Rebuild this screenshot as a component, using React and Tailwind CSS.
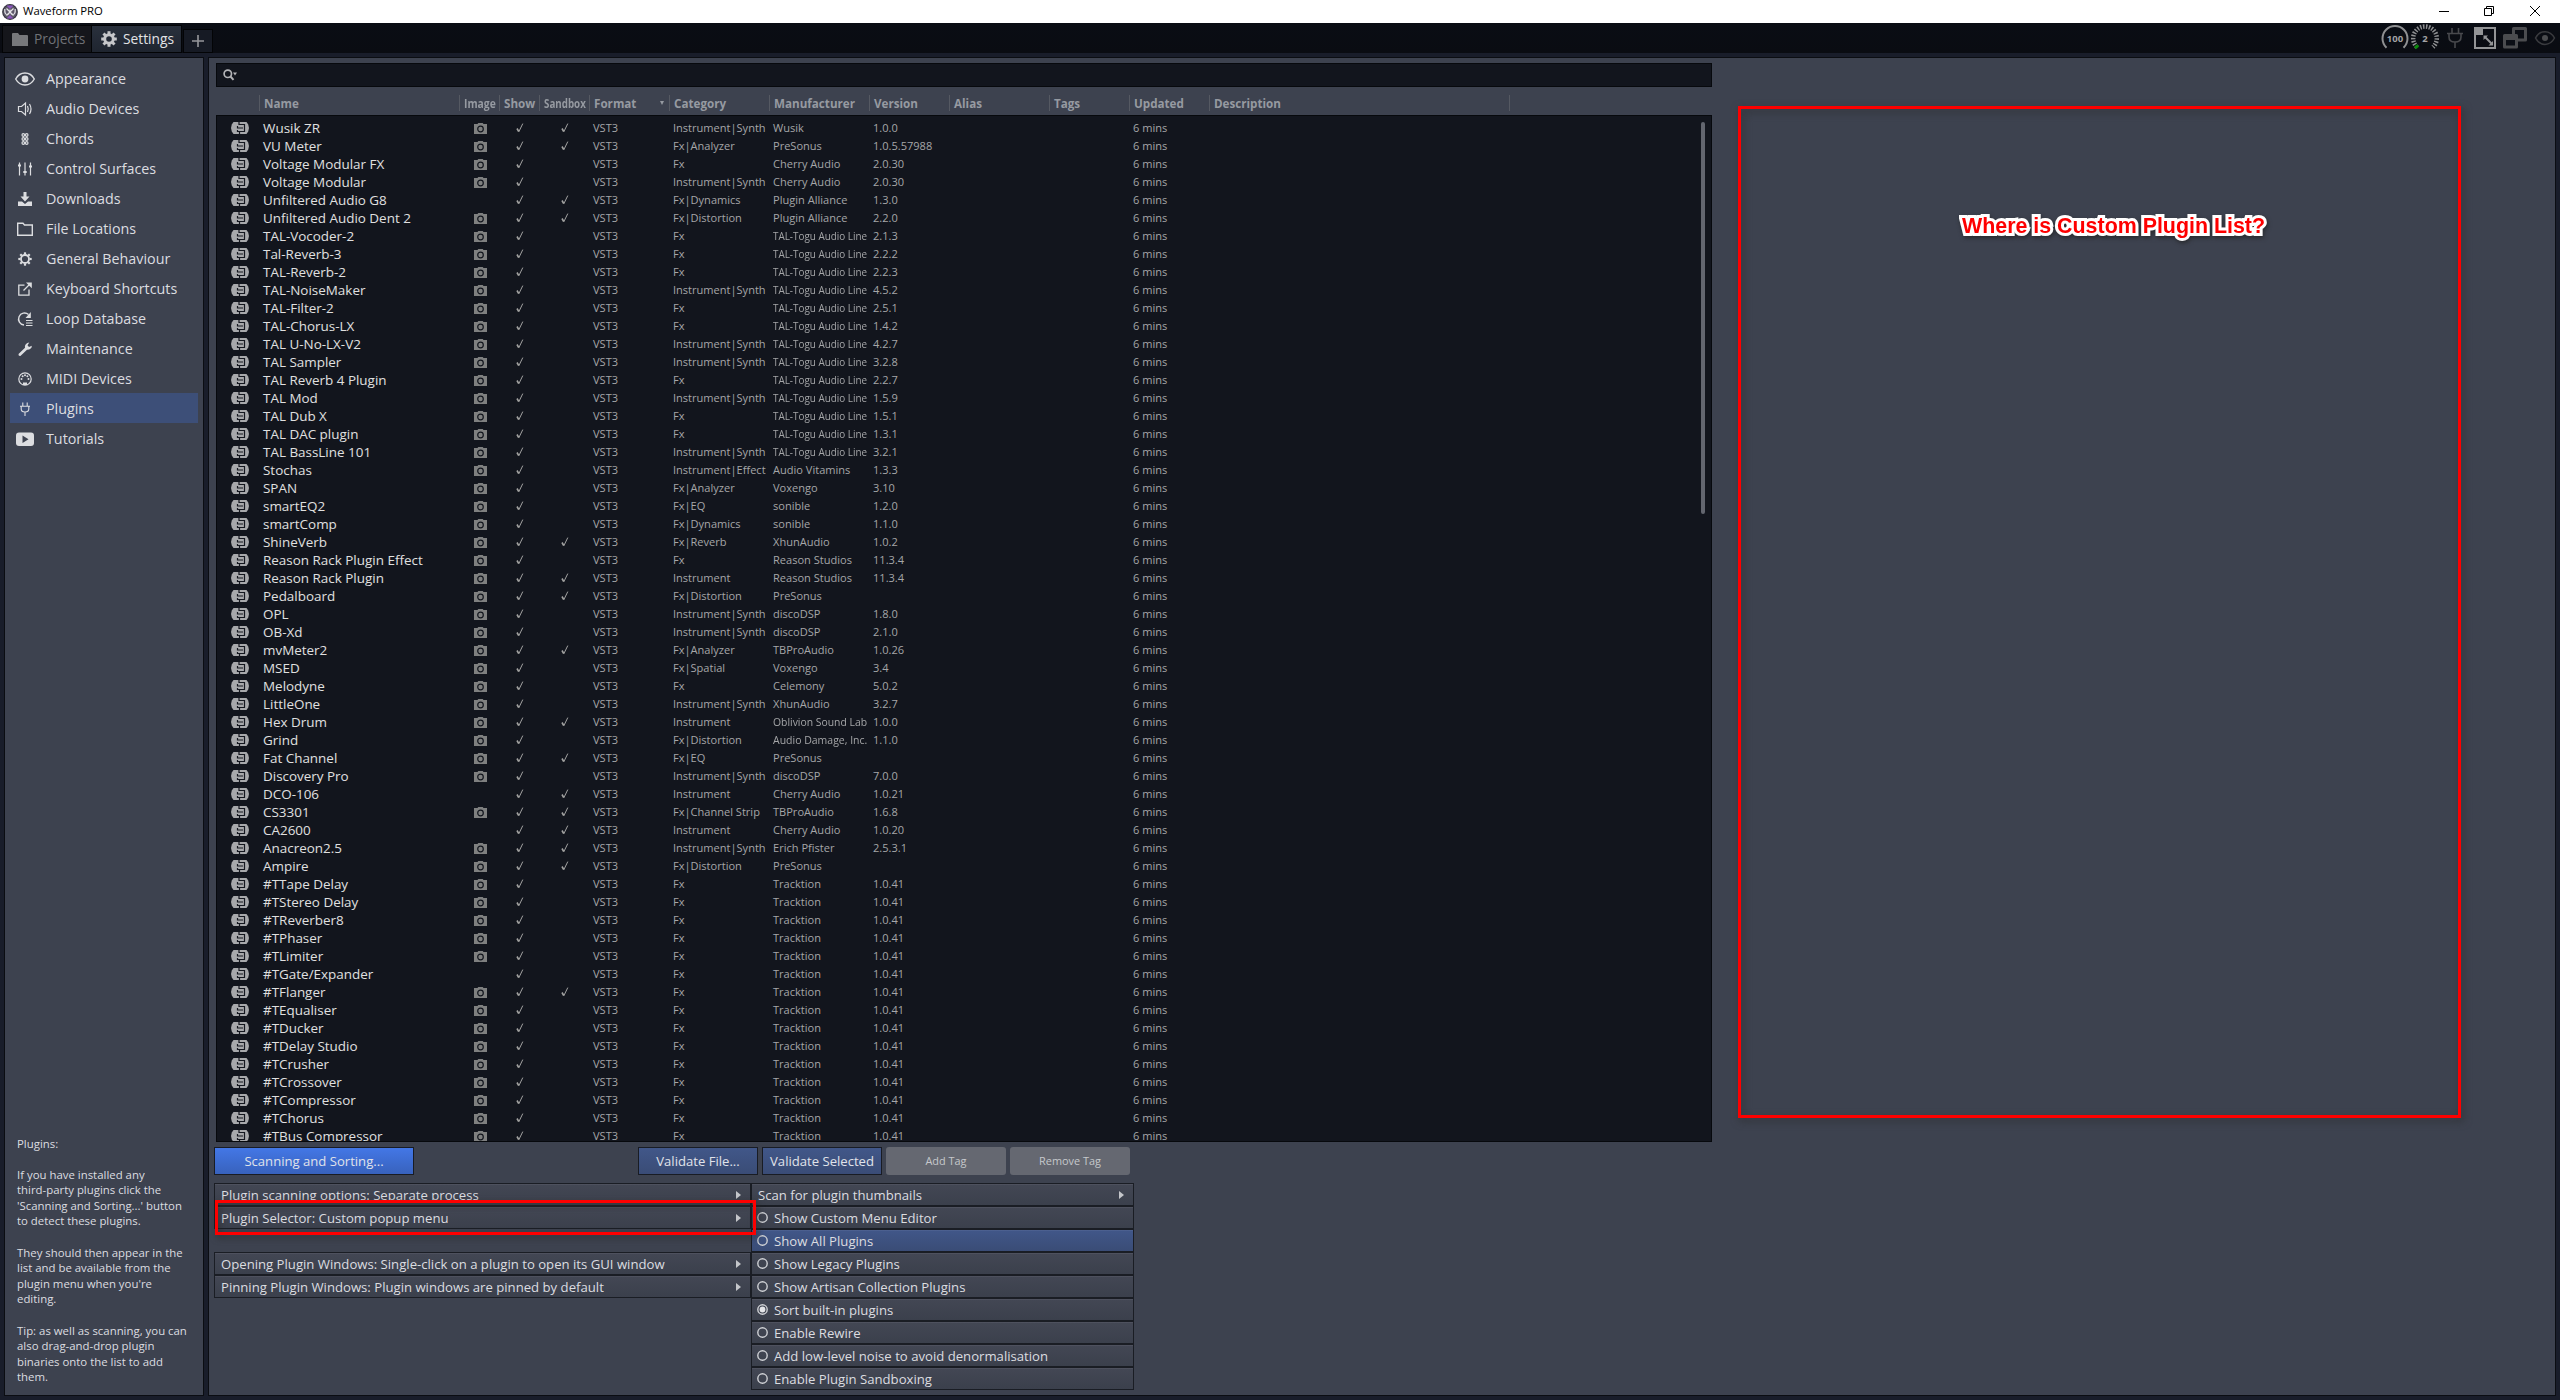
import { useLayoutEffect, useRef, useState } from 'react';

const I = 'Instrument';
const IS = 'Instrument|Synth';
const TAL = 'TAL-Togu Audio Line';

// name, has image, sandboxed, category, manufacturer, version
const plugins = [
  ['Wusik ZR', 1, 1, IS, 'Wusik', '1.0.0'],
  ['VU Meter', 1, 1, 'Fx|Analyzer', 'PreSonus', '1.0.5.57988'],
  ['Voltage Modular FX', 1, 0, 'Fx', 'Cherry Audio', '2.0.30'],
  ['Voltage Modular', 1, 0, IS, 'Cherry Audio', '2.0.30'],
  ['Unfiltered Audio G8', 0, 1, 'Fx|Dynamics', 'Plugin Alliance', '1.3.0'],
  ['Unfiltered Audio Dent 2', 1, 1, 'Fx|Distortion', 'Plugin Alliance', '2.2.0'],
  ['TAL-Vocoder-2', 1, 0, 'Fx', TAL, '2.1.3'],
  ['Tal-Reverb-3', 1, 0, 'Fx', TAL, '2.2.2'],
  ['TAL-Reverb-2', 1, 0, 'Fx', TAL, '2.2.3'],
  ['TAL-NoiseMaker', 1, 0, IS, TAL, '4.5.2'],
  ['TAL-Filter-2', 1, 0, 'Fx', TAL, '2.5.1'],
  ['TAL-Chorus-LX', 1, 0, 'Fx', TAL, '1.4.2'],
  ['TAL U-No-LX-V2', 1, 0, IS, TAL, '4.2.7'],
  ['TAL Sampler', 1, 0, IS, TAL, '3.2.8'],
  ['TAL Reverb 4 Plugin', 1, 0, 'Fx', TAL, '2.2.7'],
  ['TAL Mod', 1, 0, IS, TAL, '1.5.9'],
  ['TAL Dub X', 1, 0, 'Fx', TAL, '1.5.1'],
  ['TAL DAC plugin', 1, 0, 'Fx', TAL, '1.3.1'],
  ['TAL BassLine 101', 1, 0, IS, TAL, '3.2.1'],
  ['Stochas', 1, 0, 'Instrument|Effect', 'Audio Vitamins', '1.3.3'],
  ['SPAN', 1, 0, 'Fx|Analyzer', 'Voxengo', '3.10'],
  ['smartEQ2', 1, 0, 'Fx|EQ', 'sonible', '1.2.0'],
  ['smartComp', 1, 0, 'Fx|Dynamics', 'sonible', '1.1.0'],
  ['ShineVerb', 1, 1, 'Fx|Reverb', 'XhunAudio', '1.0.2'],
  ['Reason Rack Plugin Effect', 1, 0, 'Fx', 'Reason Studios', '11.3.4'],
  ['Reason Rack Plugin', 1, 1, I, 'Reason Studios', '11.3.4'],
  ['Pedalboard', 1, 1, 'Fx|Distortion', 'PreSonus', ''],
  ['OPL', 1, 0, IS, 'discoDSP', '1.8.0'],
  ['OB-Xd', 1, 0, IS, 'discoDSP', '2.1.0'],
  ['mvMeter2', 1, 1, 'Fx|Analyzer', 'TBProAudio', '1.0.26'],
  ['MSED', 1, 0, 'Fx|Spatial', 'Voxengo', '3.4'],
  ['Melodyne', 1, 0, 'Fx', 'Celemony', '5.0.2'],
  ['LittleOne', 1, 0, IS, 'XhunAudio', '3.2.7'],
  ['Hex Drum', 1, 1, I, 'Oblivion Sound Lab', '1.0.0'],
  ['Grind', 1, 0, 'Fx|Distortion', 'Audio Damage, Inc.', '1.1.0'],
  ['Fat Channel', 1, 1, 'Fx|EQ', 'PreSonus', ''],
  ['Discovery Pro', 1, 0, IS, 'discoDSP', '7.0.0'],
  ['DCO-106', 0, 1, I, 'Cherry Audio', '1.0.21'],
  ['CS3301', 1, 1, 'Fx|Channel Strip', 'TBProAudio', '1.6.8'],
  ['CA2600', 0, 1, I, 'Cherry Audio', '1.0.20'],
  ['Anacreon2.5', 1, 1, IS, 'Erich Pfister', '2.5.3.1'],
  ['Ampire', 1, 1, 'Fx|Distortion', 'PreSonus', ''],
  ['#TTape Delay', 1, 0, 'Fx', 'Tracktion', '1.0.41'],
  ['#TStereo Delay', 1, 0, 'Fx', 'Tracktion', '1.0.41'],
  ['#TReverber8', 1, 0, 'Fx', 'Tracktion', '1.0.41'],
  ['#TPhaser', 1, 0, 'Fx', 'Tracktion', '1.0.41'],
  ['#TLimiter', 1, 0, 'Fx', 'Tracktion', '1.0.41'],
  ['#TGate/Expander', 0, 0, 'Fx', 'Tracktion', '1.0.41'],
  ['#TFlanger', 1, 1, 'Fx', 'Tracktion', '1.0.41'],
  ['#TEqualiser', 1, 0, 'Fx', 'Tracktion', '1.0.41'],
  ['#TDucker', 1, 0, 'Fx', 'Tracktion', '1.0.41'],
  ['#TDelay Studio', 1, 0, 'Fx', 'Tracktion', '1.0.41'],
  ['#TCrusher', 1, 0, 'Fx', 'Tracktion', '1.0.41'],
  ['#TCrossover', 1, 0, 'Fx', 'Tracktion', '1.0.41'],
  ['#TCompressor', 1, 0, 'Fx', 'Tracktion', '1.0.41'],
  ['#TChorus', 1, 0, 'Fx', 'Tracktion', '1.0.41'],
  ['#TBus Compressor', 1, 0, 'Fx', 'Tracktion', '1.0.41'],
];

const headers = ['', 'Name', 'Image', 'Show', 'Sandbox', 'Format', 'Category', 'Manufacturer', 'Version', 'Alias', 'Tags', 'Updated', 'Description'];
const headerWidths = { Image: 32, Show: 32, Sandbox: 42 };

const GRID = 'grid grid-cols-[43px_200px_40px_40px_50px_80px_100px_100px_80px_100px_80px_80px_300px]';

// Text that is squeezed horizontally when it is wider than its cell
function Fit({ children, max }) {
  const ref = useRef(null);
  const [scale, setScale] = useState(1);
  useLayoutEffect(() => {
    const width = ref.current.offsetWidth;
    if (width > max) setScale(max / width);
  }, [max]);
  return (
    <span ref={ref} className="inline-block origin-left whitespace-nowrap" style={{ transform: scale < 1 ? `scaleX(${scale})` : undefined }}>
      {children}
    </span>
  );
}

const stroke = { fill: 'none', stroke: 'currentColor', strokeWidth: 1.4 };
const teeth = [0, 45, 90, 135, 180, 225, 270, 315];

const navItems = [
  ['Appearance', (
    <g key="i">
      <path {...stroke} d="M0.7 10C5 2 15 2 19.3 10C15 18 5 18 0.7 10Z" />
      <circle cx="10" cy="10" r="3.4" fill="currentColor" />
    </g>
  )],
  ['Audio Devices', (
    <g key="i" {...stroke} strokeWidth="1.2">
      <path d="M3.5 7.5H6.5L10.5 4V16L6.5 12.5H3.5Z" />
      <path d="M12.5 7Q14 10 12.5 13M14.5 5Q17.5 10 14.5 15" />
    </g>
  )],
  ['Chords', (
    <g key="i" {...stroke} strokeWidth="1.2">
      <circle cx="8.3" cy="6" r="1.3" /><circle cx="11.7" cy="6" r="1.3" />
      <circle cx="8.3" cy="10" r="1.3" /><circle cx="11.7" cy="10" r="1.3" />
      <circle cx="8.3" cy="14" r="1.3" /><circle cx="11.7" cy="14" r="1.3" />
    </g>
  )],
  ['Control Surfaces', (
    <g key="i" {...stroke} strokeWidth="1.2">
      <path d="M4.5 3.5V16.5M10 3.5V16.5M15.5 3.5V16.5" />
      <path strokeWidth="2" d="M3 6.5H6M8.3 13H11.7M14 7.5H17" />
    </g>
  )],
  ['Downloads', (
    <g key="i" fill="currentColor">
      <path d="M8.5 3H11.5V7.5H14.5L10 12.5L5.5 7.5H8.5Z" />
      <path d="M3 12.5H7L10 15L13 12.5H17V17H3Z" />
    </g>
  )],
  ['File Locations', <path key="i" {...stroke} d="M2.7 4.2H8L9.5 6H17.3V16.3H2.7Z" />],
  ['General Behaviour', (
    <g key="i" stroke="currentColor" fill="none">
      <circle cx="10" cy="10" r="4" strokeWidth="1.8" />
      {teeth.map((a) => <path key={a} strokeWidth="2.2" d="M10 3.3V5.5" transform={`rotate(${a} 10 10)`} />)}
    </g>
  )],
  ['Keyboard Shortcuts', (
    <g key="i" {...stroke} strokeWidth="1.3">
      <path d="M9.5 6.2H3.8V16.2H14V10.5M8.5 11.5L15 5" />
      <path fill="currentColor" stroke="none" d="M11 3.5H16.8V9.3Z" />
    </g>
  )],
  ['Loop Database', (
    <g key="i" {...stroke}>
      <path d="M9 16A6 6 0 1 1 13.5 5.5" />
      <path fill="currentColor" stroke="none" d="M15.8 3V9H10.5Z" />
      <path d="M11 11.5H17.5M11 14H17.5M11 16.5H17.5" strokeWidth="1.2" />
    </g>
  )],
  ['Maintenance', <path key="i" fill="currentColor" d="M3.5 15L10 8.8Q9.4 5.5 12.3 3.9L14.3 3.5L12.5 6.3L14 8L16.8 6.8Q17 10.5 12 10.8L5.4 16.9Q3.2 17.2 3.5 15Z" />],
  ['MIDI Devices', (
    <g key="i" fill="currentColor">
      <circle cx="10" cy="10" r="6.2" {...stroke} strokeWidth="1.2" />
      <circle cx="6.5" cy="10" r="1" /><circle cx="13.5" cy="10" r="1" /><circle cx="7.6" cy="7.3" r="1" />
      <circle cx="12.4" cy="7.3" r="1" /><circle cx="10" cy="6.2" r="1" /><path d="M8 16V13.5H12V16Z" />
    </g>
  )],
  ['Plugins', (
    <g key="i" {...stroke} strokeWidth="1.1">
      <path d="M7.8 3.5V7M12.2 3.5V7M5 7.2H15M6.2 7.2V10Q6.2 13 10 13Q13.8 13 13.8 10V7.2M10 13V17" />
    </g>
  )],
  ['Tutorials', (
    <g key="i">
      <rect x="1" y="3.5" width="18" height="13.5" rx="3" fill="currentColor" />
      <path d="M7.5 6.5V14L13.5 10.2Z" fill="#3d424f" />
    </g>
  )],
];

const leftOptions = [
  'Plugin scanning options: Separate process',
  'Plugin Selector: Custom popup menu',
  null,
  'Opening Plugin Windows: Single-click on a plugin to open its GUI window',
  'Pinning Plugin Windows: Plugin windows are pinned by default',
];

const toggles = [
  'Show Custom Menu Editor', 'Show All Plugins', 'Show Legacy Plugins', 'Show Artisan Collection Plugins',
  'Sort built-in plugins', 'Enable Rewire', 'Add low-level noise to avoid denormalisation', 'Enable Plugin Sandboxing',
];

function PluginIcon() {
  return (
    <svg width="18" height="12" viewBox="0 0 18 12">
      <path d="M2.5 0H15.5L17.2 2.5L18 6L17.2 9.5L15.5 12H2.5L0.8 9.5L0 6L0.8 2.5Z" fill="#a7a8ab" />
      <path d="M8 0V2.5H13.5V9.5H8.5V12M6.5 4V6H12M6.5 8V9.5H9" fill="none" stroke="#14171f" strokeWidth="1.2" />
    </svg>
  );
}

function CameraIcon() {
  return (
    <svg width="13" height="11" viewBox="0 0 13 11">
      <path d="M0 1H3.5L4.3 0H8.7L9.5 1H13V11H0Z" fill="#7f8080" />
      <circle cx="6.5" cy="6" r="2.8" fill="none" stroke="#12151d" strokeWidth="1.2" />
    </svg>
  );
}

function Tick() {
  return (
    <svg width="8" height="10" viewBox="0 0 8 10" fill="none" stroke="#a3a3a2">
      <path d="M1 5.5L2.7 8.5" strokeWidth="1.6" />
      <path d="M2.7 9L6.8 0.6" strokeWidth="1" />
    </svg>
  );
}

function Arrow() {
  return (
    <svg width="5" height="8" viewBox="0 0 5 8" fill="#c4c6ca">
      <path d="M0 0L5 4L0 8Z" />
    </svg>
  );
}

function TitleBar() {
  return (
    <div className="flex h-[23px] items-center bg-white pl-[2px] text-[11.3px] text-black">
      <svg width="16" height="16" viewBox="0 0 16 16">
        <circle cx="8" cy="8" r="7.9" fill="#35353f" />
        <circle cx="8" cy="8" r="6.7" fill="#5d5868" />
        <path d="M4.5 1.5L8 5L11.5 1.5ZM4.5 14.5L8 11L11.5 14.5Z" fill="#8a55bd" />
        <path d="M2.8 5Q2.5 10.5 5 10.5Q7 10.5 8 7Q9 10.5 11 10.5Q13.5 10.5 13.2 5M4.5 4.5L11.5 11.5M11.5 4.5L4.5 11.5" fill="none" stroke="#e4e3e8" strokeWidth="1.2" />
      </svg>
      <span className="ml-[5px]">Waveform PRO</span>
      <svg className="mr-[19px] ml-auto -mt-[2px]" width="102" height="12" viewBox="0 0 102 12" fill="none" stroke="#000">
        <path d="M0 6.5H10" />
        <path d="M45.5 3.5H52.5V10.5H45.5ZM47.5 3.5V1.5H54.5V8.5H52.5" />
        <path d="M91 1L101 11M101 1L91 11" />
      </svg>
    </div>
  );
}

function StatusIcons() {
  return (
    <svg width="180" height="30" viewBox="0 0 180 30" fill="none">
      <path d="M6.5 24.7A12.5 12.5 0 1 1 23.5 24.7" stroke="#8f9092" strokeWidth="2" />
      <text x="15" y="18.5" textAnchor="middle" fontSize="9.5" fontWeight="700" fill="#a2a3a5">100</text>
      <path d="M37 24A11.8 11.8 0 1 1 53 24" stroke="#8f9092" strokeWidth="4.5" strokeDasharray="1.5 1.4" />
      <path d="M38.2 22.3L35 25" stroke="#0b8a0b" strokeWidth="3" />
      <text x="45" y="18.5" textAnchor="middle" fontSize="9.5" fontWeight="700" fill="#a2a3a5">2</text>
      <path d="M72 5V10.5M78.5 5V10.5M67 10.5H83M69 10.5V14Q69 19 75 19Q81 19 81 14V10.5M75 19V25" stroke="#48494d" strokeWidth="1.6" />
      <path d="M95 5H115V25H95Z" stroke="#939496" strokeWidth="2" />
      <path d="M94 4H103V12H94Z" fill="#939496" />
      <path d="M105 14L112 21" stroke="#939496" strokeWidth="2" />
      <path d="M103.5 12.5H108L103.5 17ZM113 22.5H108.5L113 18Z" fill="#939496" />
      <path d="M133.5 5.5H145.5V17H133.5Z" stroke="#4b4c4f" strokeWidth="3" strokeLinejoin="round" />
      <path d="M124.5 12.5H136.5V24H124.5Z" fill="#0b0e15" stroke="#4b4c4f" strokeWidth="3" strokeLinejoin="round" />
      <path d="M124 12H137V17H124Z" fill="#4b4c4f" />
      <path d="M155.5 15C160 6.5 170 6.5 174.5 15C170 23.5 160 23.5 155.5 15Z" stroke="#3a3b3f" strokeWidth="1.5" />
      <circle cx="165" cy="15" r="3" fill="#4b4c4f" />
    </svg>
  );
}

function TabBar() {
  return (
    <div className="flex h-[30px] items-end bg-gradient-to-b from-[#0a0d14] to-[#0a0c12] pl-[2px]">
      <div className="flex h-[28px] w-[90px] items-center border border-[#030406] bg-[#15161b] pl-[9px] text-[13.75px] text-[#707176]">
        <svg className="mr-[6px]" width="16" height="13" viewBox="0 0 16 13" fill="#77787b">
          <path d="M0 1Q0 0 1 0H6L7.5 2H15Q16 2 16 3V13H0Z" />
        </svg>
        Projects
      </div>
      <div className="flex h-[28px] w-[90px] items-center border border-l-0 border-[#030406] bg-gradient-to-b from-[#29303c] to-[#1f2530] pl-[9px] text-[13.75px] text-[#e2e3e5]">
        <svg className="mr-[6px]" width="16" height="16" viewBox="0 0 16 16" fill="none" stroke="#c6c7ca">
          <circle cx="8" cy="8" r="4.3" strokeWidth="3" />
          {teeth.map((a) => <path key={a} strokeWidth="3" d="M8 0.2V3" transform={`rotate(${a} 8 8)`} />)}
        </svg>
        Settings
      </div>
      <div className="ml-[1px] flex h-[24px] w-[30px] items-center justify-center border border-[#030406] bg-[#161a24]">
        <svg width="12" height="12" viewBox="0 0 12 12" stroke="#96979b" strokeWidth="1.6">
          <path d="M6 0V12M0 6H12" />
        </svg>
      </div>
      <div className="ml-auto">
        <StatusIcons />
      </div>
    </div>
  );
}

function Sidebar() {
  return (
    <div className="flex w-[200px] flex-col border border-[#0b0d12] bg-[#3d424f] pt-[5px] text-[#dcdde0]">
      {navItems.map(([label, icon]) => (
        <div
          key={label}
          className={`mx-[5px] flex h-[30px] items-center pt-[2px] pl-[5px] text-[14.3px] ${label === 'Plugins' ? 'bg-[#3d4f78]' : ''}`}
        >
          <svg className="mr-[11px] shrink-0" width="20" height="20" viewBox="0 0 20 20">{icon}</svg>
          {label}
        </div>
      ))}
      <div className="mt-auto mb-[10px] pl-3 text-[11.4px] leading-[15.6px] whitespace-pre">
        {`Plugins:

If you have installed any
third-party plugins click the
'Scanning and Sorting...' button
to detect these plugins.

They should then appear in the
list and be available from the
plugin menu when you're
editing.

Tip: as well as scanning, you can
also drag-and-drop plugin
binaries onto the list to add
them.`}
      </div>
    </div>
  );
}

function PluginTable() {
  return (
    <div className="w-[1496px]">
      <div className="flex h-6 items-center border border-[#07090d] bg-[#12151d] pl-[6px]">
        <svg width="15" height="12" viewBox="0 0 15 12" fill="none" stroke="#b3b4b7">
          <circle cx="4.8" cy="4.8" r="3.7" strokeWidth="1.7" />
          <path d="M7.5 7.5L10.5 10.8" strokeWidth="2" />
          <path d="M10 3.5H14L12 6.5Z" fill="#b3b4b7" stroke="none" />
        </svg>
      </div>
      <div className={`${GRID} h-7 items-center pt-1 pl-px`}>
        {headers.map((h) => (
          <div key={h} className="flex h-4 items-center border-r border-[#555962] pt-[2px] pl-[4px] text-[11.65px] font-bold text-[#969aa1]">
            <Fit max={headerWidths[h] || 90}>{h}</Fit>
            {h === 'Format' && (
              <svg className="-mt-[2px] mr-[5px] ml-auto" width="4" height="4" viewBox="0 0 4 4" fill="#969aa1"><path d="M0 0H4L2 4Z" /></svg>
            )}
          </div>
        ))}
      </div>
      <div className="relative h-[1027px] overflow-hidden border border-[#07090d] bg-[#12151d] pt-[3px]">
        {plugins.map(([name, image, sandbox, category, maker, version]) => (
          <div key={name} className={`${GRID} h-[18px] items-center text-[11.05px] text-[#a5a6a8]`}>
            <div className="pl-[14px]"><PluginIcon /></div>
            <div className="pl-[3px] text-[13.45px] leading-[18px] text-[#e0e0e0]">{name}</div>
            <div className="flex justify-center">{image ? <CameraIcon /> : null}</div>
            <div className="flex justify-center"><Tick /></div>
            <div className="flex justify-center">{sandbox ? <Tick /> : null}</div>
            <div className="pl-[3px]">VST3</div>
            <div className="pl-[3px]"><Fit max={94}>{category}</Fit></div>
            <div className="pl-[3px]"><Fit max={94}>{maker}</Fit></div>
            <div className="pl-[3px]">{version}</div>
            <div />
            <div />
            <div className="pl-[3px]">6 mins</div>
            <div />
          </div>
        ))}
        <div className="absolute top-[6px] right-[6px] h-[392px] w-[4px] rounded-full bg-[#63666f]" />
      </div>
    </div>
  );
}

function ButtonRow() {
  return (
    <div className="mt-[5px] -ml-[2px] flex h-7 text-[13.1px] text-[#e0e3ea]">
      <button className="w-[200px] border border-[#191c24] bg-gradient-to-b from-[#4377e6] to-[#3862bd] pt-px">Scanning and Sorting...</button>
      <button className="ml-[224px] w-[120px] border border-[#191c24] bg-gradient-to-b from-[#415789] to-[#3a4c76] pt-px">Validate File...</button>
      <button className="ml-1 w-[120px] border border-[#191c24] bg-gradient-to-b from-[#415789] to-[#3a4c76] pt-px">Validate Selected</button>
      <button className="ml-1 w-[120px] rounded-[3px] bg-[#656871] text-[10.9px] text-[#c6c8cc]">Add Tag</button>
      <button className="ml-1 w-[120px] rounded-[3px] bg-[#656871] text-[10.9px] text-[#c6c8cc]">Remove Tag</button>
    </div>
  );
}

function MenuRow({ children, arrow, active }) {
  return (
    <div
      className={`flex h-[23px] items-center border border-[#1a1d24] bg-gradient-to-b pt-[2px] pr-[9px] shadow-[inset_0_1px_0_rgba(255,255,255,0.06)] ${
        active ? 'from-[#415789] to-[#3a4c76]' : 'from-[#434754] to-[#3b404c]'
      }`}
    >
      {children}
      {arrow && <span className="-mt-[2px] ml-auto"><Arrow /></span>}
    </div>
  );
}

function Options() {
  return (
    <div className="relative mt-2 -ml-[2px] flex items-start text-[13.15px] text-[#dcdde0]">
      <div className="w-[537px]">
        {leftOptions.map((o, i) => (o ? (
          <MenuRow key={o} arrow><span className="pl-[6px]">{o}</span></MenuRow>
        ) : <div key={i} className="h-[23px]" />))}
      </div>
      <div className="w-[383px]">
        <MenuRow arrow><span className="pl-[6px]">Scan for plugin thumbnails</span></MenuRow>
        {toggles.map((t) => (
          <MenuRow key={t} active={t === 'Show All Plugins'}>
            <svg className="-mt-[2px] mr-[6px] ml-[5px]" width="11" height="11" viewBox="0 0 11 11">
              <circle cx="5.5" cy="5.5" r="4.7" fill="none" stroke="#cfd1d5" strokeWidth="1.4" />
              {t === 'Sort built-in plugins' && <circle cx="5.5" cy="5.5" r="2.9" fill="#e4e5e8" />}
            </svg>
            {t}
          </MenuRow>
        ))}
      </div>
      <div className="absolute top-[17px] left-[1px] h-[35px] w-[541px] border-3 border-[#fe0000] drop-shadow-[2px_3px_3px_rgba(40,40,40,0.8)]" />
    </div>
  );
}

export default function App() {
  return (
    <div className="flex h-[1400px] w-[2560px] flex-col overflow-hidden bg-[#191d2a] font-['Open_Sans',sans-serif]">
      <TitleBar />
      <TabBar />
      <div className="flex gap-1 pt-1 pl-1">
        <div className="flex h-[1339px]">
          <Sidebar />
        </div>
        <div className="relative h-[1339px] w-[2348px] border border-[#0b0d12] bg-[#3d424f] pt-[5px] pl-[7px]">
          <PluginTable />
          <ButtonRow />
          <Options />
          <div className="absolute top-[48px] left-[1529px] h-[1012px] w-[723px] border-3 border-[#fe0000] drop-shadow-[2px_3px_4px_rgba(40,40,40,0.8)]" />
          <div className="absolute top-[155px] left-[1753px] font-['Liberation_Sans',sans-serif] text-[21.4px] leading-[26px] font-bold whitespace-nowrap text-[#fe0000] [paint-order:stroke_fill] drop-shadow-[1px_2px_2px_rgba(30,30,30,0.7)] [-webkit-text-stroke:6px_white]">
            Where is Custom Plugin List?
          </div>
        </div>
      </div>
    </div>
  );
}
